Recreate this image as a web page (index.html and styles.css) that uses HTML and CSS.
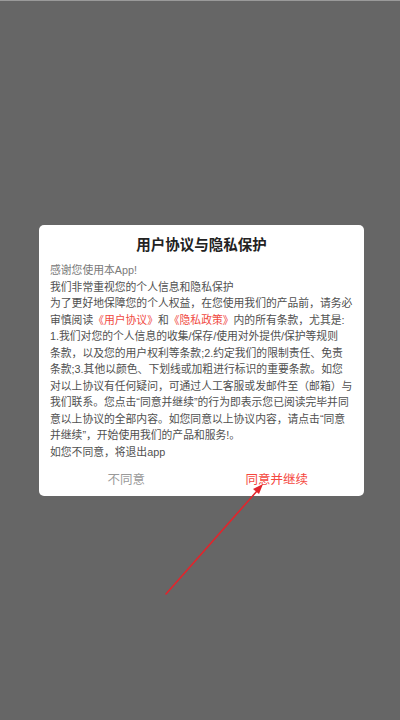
FILE: index.html
```
<!DOCTYPE html>
<html lang="zh-CN">
<head>
<meta charset="utf-8">
<link rel="stylesheet" href="styles.css">
</head>
<body>
<div class="screen">
  <div class="dialog">
    <div class="title">用户协议与隐私保护</div>
    <div class="content">
      <div class="line first">感谢您使用本App!</div>
      <div class="line">我们非常重视您的个人信息和隐私保护</div>
      <div class="line">为了更好地保障您的个人权益，在您使用我们的产品前，请务必</div>
      <div class="line">审慎阅读<span class="link">《用户协议》</span>和<span class="link">《隐私政策》</span>内的所有条款，尤其是:</div>
      <div class="line">1.我们对您的个人信息的收集/保存/使用对外提供/保护等规则</div>
      <div class="line">条款，以及您的用户权利等条款;2.约定我们的限制责任、免责</div>
      <div class="line">条款;3.其他以颜色、下划线或加粗进行标识的重要条款。如您</div>
      <div class="line">对以上协议有任何疑问，可通过人工客服或发邮件至（邮箱）与</div>
      <div class="line">我们联系。您点击“同意并继续”的行为即表示您已阅读完毕并同</div>
      <div class="line">意以上协议的全部内容。如您同意以上协议内容，请点击“同意</div>
      <div class="line">并继续”，开始使用我们的产品和服务!。</div>
      <div class="line">如您不同意，将退出app</div>
    </div>
    <div class="actions">
      <div class="btn disagree">不同意</div>
      <div class="btn agree">同意并继续</div>
    </div>
  </div>
  <svg class="arrow" width="400" height="720" viewBox="0 0 400 720">
    <line x1="166" y1="594" x2="257" y2="491" stroke="#e3242b" stroke-width="1.6" stroke-linecap="round"/>
    <polygon points="263,484 253,489 259,494" fill="#e3242b"/>
  </svg>
</div>
</body>
</html>
```
FILE: styles.css
```
html, body {
  margin: 0;
  padding: 0;
}
body {
  width: 400px;
  height: 720px;
  background: #666666;
  font-family: "Liberation Sans", "Noto Sans CJK SC", sans-serif;
  overflow: hidden;
}
.screen {
  position: relative;
  width: 400px;
  height: 720px;
  border-top: 1px solid #9a9a9a;
  box-sizing: border-box;
  padding-top: 224px;
  padding-left: 39px;
}
.dialog {
  width: 325px;
  background: #ffffff;
  border-radius: 5px;
  display: flex;
  flex-direction: column;
}
.title {
  padding-top: 10px;
  height: 20px;
  line-height: 20px;
  text-align: center;
  font-size: 14.5px;
  font-weight: bold;
  color: #222222;
}
.content {
  padding: 7px 8px 0 11px;
  font-size: 10.8px;
  line-height: 16.5px;
  color: #505050;
}
.line {
  white-space: nowrap;
}
.line.first {
  color: #7a7a7a;
}
.link {
  color: #f0493f;
}
.actions {
  display: flex;
  height: 36px;
  padding: 0 12px;
}
.btn {
  flex: 1;
  display: flex;
  align-items: center;
  justify-content: center;
  font-size: 12.5px;
}
.disagree {
  color: #9a9a9a;
}
.agree {
  color: #f5473e;
}
.arrow {
  position: absolute;
  left: 0;
  top: -1px;
  pointer-events: none;
}
```
